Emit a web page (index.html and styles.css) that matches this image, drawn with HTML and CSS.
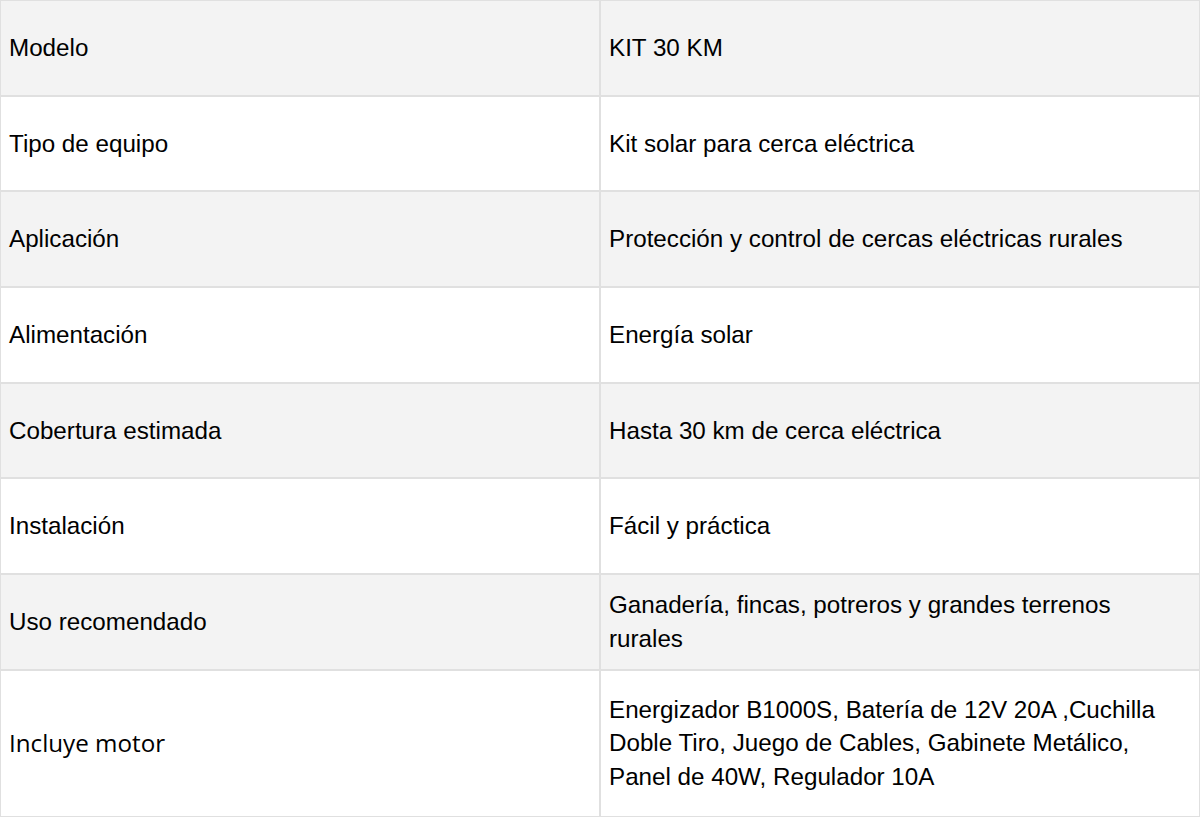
FILE: index.html
```html
<!DOCTYPE html>
<html lang="es">
<head>
<meta charset="utf-8">
<title>KIT 30 KM</title>
<link rel="stylesheet" href="styles.css">
</head>
<body>
<table class="spec">
  <tbody>
    <tr class="row shade"><td class="cell">Modelo</td><td class="cell">KIT 30 KM</td></tr>
    <tr class="row"><td class="cell">Tipo de equipo</td><td class="cell">Kit solar para cerca eléctrica</td></tr>
    <tr class="row shade"><td class="cell">Aplicación</td><td class="cell">Protección y control de cercas eléctricas rurales</td></tr>
    <tr class="row"><td class="cell">Alimentación</td><td class="cell">Energía solar</td></tr>
    <tr class="row shade"><td class="cell">Cobertura estimada</td><td class="cell">Hasta 30 km de cerca eléctrica</td></tr>
    <tr class="row"><td class="cell">Instalación</td><td class="cell">Fácil y práctica</td></tr>
    <tr class="row shade"><td class="cell">Uso recomendado</td><td class="cell">Ganadería, fincas, potreros y grandes terrenos rurales</td></tr>
    <tr class="row last"><td class="cell alt-font">Incluye motor</td><td class="cell">Energizador B1000S, Batería de 12V 20A ,Cuchilla Doble Tiro, Juego de Cables, Gabinete Metálico, Panel de 40W, Regulador 10A</td></tr>
  </tbody>
</table>
</body>
</html>
```

FILE: styles.css
```css
html, body {
  margin: 0;
  padding: 0;
  background: #ffffff;
}

.spec {
  width: 1200px;
  border-collapse: separate;
  border-spacing: 0;
  table-layout: fixed;
  font-family: "Liberation Sans", Arial, sans-serif;
  font-size: 24.2px;
  line-height: 1.39;
  color: #000000;
}

.row {
  height: 95.7px;
}

.row.last {
  height: 147px;
}

.shade {
  background: #f3f3f3;
}

.cell {
  width: 50%;
  border: 1px solid #e0e0e0;
  padding: 0 20px 0 8px;
  vertical-align: middle;
  box-sizing: border-box;
}

.alt-font {
  font-family: "Open Sans", sans-serif;
}
```
